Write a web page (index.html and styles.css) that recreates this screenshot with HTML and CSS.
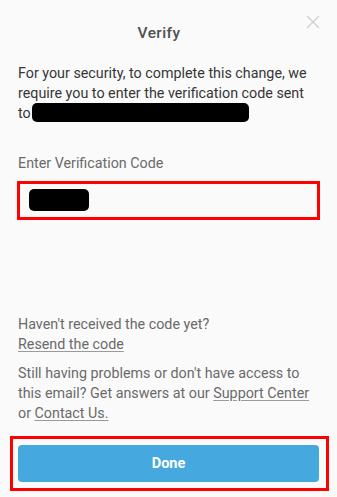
FILE: index.html
```html
<!DOCTYPE html>
<html lang="en">
<head>
<meta charset="utf-8">
<title>Verify</title>
<link rel="stylesheet" href="styles.css">
</head>
<body>
<div class="dialog">
  <header class="header">
    <h1 class="title">Verify</h1>
    <button class="close" aria-label="Close">
      <svg width="14" height="14" viewBox="0 0 14 14"><path d="M1 1 L13 13 M13 1 L1 13" stroke="#cfcfcf" stroke-width="1.3" fill="none"/></svg>
    </button>
  </header>
  <p class="intro">For your security, to complete this change, we require you to enter the verification code sent to<span class="redact redact-email"></span></p>
  <label class="label">Enter Verification Code</label>
  <div class="field"><span class="redact redact-code"></span></div>
  <p class="help">Haven't received the code yet?<br><a class="link" href="#">Resend the code</a></p>
  <p class="help help-2">Still having problems or don't have access to this email? Get answers at our <a class="link" href="#">Support Center</a> or <a class="link" href="#">Contact Us.</a></p>
  <div class="done-wrap"><button class="done">Done</button></div>
</div>
</body>
</html>
```
FILE: styles.css
```css
html, body {
  margin: 0;
  padding: 0;
  background: #fafafa;
}
body {
  font-family: Roboto, "Liberation Sans", sans-serif;
  font-size: 14.3px;
  line-height: 20px;
  color: #363636;
}
.dialog {
  padding: 23px 18px 0 18px;
}
.header {
  position: relative;
}
.title {
  margin: 0;
  padding-right: 19px;
  text-align: center;
  font-size: 15.5px;
  font-weight: 500;
  line-height: 20px;
  color: #505050;
  letter-spacing: 0.4px;
}
.close {
  position: absolute;
  top: -8px;
  right: -1px;
  width: 14px;
  height: 14px;
  padding: 0;
  border: 0;
  background: none;
  display: block;
}
.close svg { display: block; }
.intro {
  margin: 20px 2px 0 0;
}
.redact {
  display: inline-block;
  background: #000;
  border-radius: 5px;
}
.redact-email {
  width: 217px;
  height: 19px;
  vertical-align: top;
  margin-left: 1px;
}
.label {
  display: block;
  margin-top: 30px;
  color: #6a6a6a;
}
.field {
  margin: 8px -1px 0 -1px;
  height: 39px;
  box-sizing: border-box;
  border: 3px solid #ff0000;
  padding: 5px 9px;
}
.redact-code {
  width: 60px;
  height: 22px;
  display: block;
}
.help {
  margin: 94px 0 0 0;
  color: #6a6a6a;
}
.help-2 {
  margin-top: 9px;
}
.link {
  color: #6a6a6a;
  text-decoration: underline;
  text-decoration-color: #9a9a9a;
  text-underline-offset: 2px;
}
.done-wrap {
  margin: 13px -10px 0 -8px;
  border: 3px solid #ff0000;
  padding: 6px 7px 6px 5px;
}
.done {
  display: block;
  width: 100%;
  height: 37px;
  border: 0;
  border-radius: 4px;
  background: #45a8de;
  color: #ffffff;
  font-family: Roboto, "Liberation Sans", sans-serif;
  font-size: 14.5px;
  font-weight: 700;
}
```
